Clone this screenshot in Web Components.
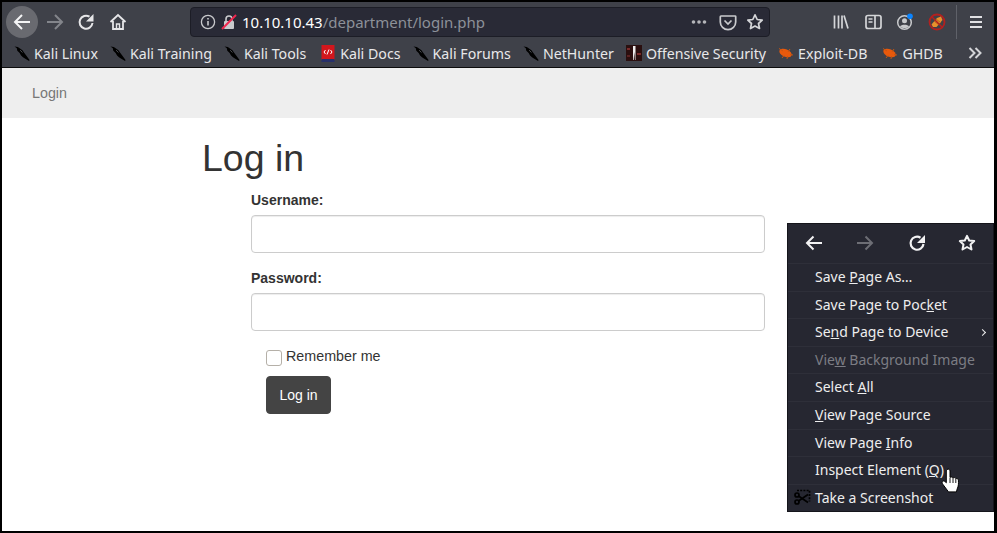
<!DOCTYPE html>
<html>
<head>
<meta charset="utf-8">
<title>Login</title>
<style>
  html, body { margin: 0; padding: 0; background: #fff; }
  body { width: 997px; height: 533px; overflow: hidden; }
</style>
</head>
<body>
<browser-window>
  <browser-toolbar></browser-toolbar>
  <bookmark-bar></bookmark-bar>
  <site-nav>Login</site-nav>
  <login-form></login-form>
  <context-menu></context-menu>
</browser-window>

<script>
// shared inline icons
const kaliIcon = `<svg width="17" height="17" viewBox="0 0 17 17"><path d="M0.500 1 L4 1.500 L6 3 L9 5 L11 8 L13 10.500 L16.500 15.500 L16 16.500 L12 14 L9.500 12.500 L7.500 10.500 L6 8 L3.500 5.500 L3 3 Z" fill="#000"/><path d="M6.500 5 9 7.500" stroke="#55565c" stroke-width="1"/></svg>`;
const bugIcon = `<svg width="16" height="16" viewBox="0 0 16 16"><ellipse cx="7.500" cy="8" rx="6.500" ry="3.800" transform="rotate(22 7.500 8)" fill="#e8590c"/><path d="M1 3.500 5 6M4 13 6 10.500M9 14 9.500 11M12 4 10 7M15 10l-3-.5" stroke="#c9560f" stroke-width="1"/></svg>`;

class BrowserWindow extends HTMLElement {
  constructor() {
    super();
    this.attachShadow({ mode: 'open' });
    this.shadowRoot.innerHTML = `
      <style>
        :host {
          display: block;
          position: relative;
          box-sizing: border-box;
          width: 997px;
          height: 533px;
          border: 2px solid #000;
          border-right-width: 3px;
          overflow: hidden;
          background: #fff;
        }
      </style>
      <slot></slot>`;
  }
}

class BrowserToolbar extends HTMLElement {
  constructor() {
    super();
    this.attachShadow({ mode: 'open' });
    this.shadowRoot.innerHTML = `
      <style>
        :host {
          display: flex;
          align-items: center;
          height: 40px;
          background: #3f4149;
          box-sizing: border-box;
          padding-left: 4px;
          font-family: "Noto Sans", sans-serif;
        }
        .btn { width: 32px; height: 32px; display: flex; align-items: center; justify-content: center; flex: none; }
        .back { background: #696a70; border-radius: 50%; }
        svg { display: block; }
        .url {
          flex: none;
          box-sizing: border-box;
          width: 580px;
          height: 30px;
          margin-left: 56px;
          margin-right: 55px;
          background: #292a36;
          border: 1px solid #1c1d26;
          border-radius: 4px;
          display: flex;
          align-items: center;
          padding-left: 9px;
          font-size: 15px;
          color: #8d9199;
        }
        .url b { font-weight: 400; color: #fff; }
        .addr { margin-left: 5px; flex: 1; white-space: nowrap; }
        .lock { margin-left: 5px; }
        .pageacts { display: flex; align-items: center; gap: 9px; padding-right: 5px; }
        .dots { margin-right: 3px; }
        .sep { width: 1px; height: 34px; background: #5f6169; margin: 0 9px 0 3px; flex: none; }
      </style>
      <div class="btn back"><svg width="20" height="20" viewBox="0 0 20 20" fill="none" stroke="#f4f4f5" stroke-width="2"><path d="M18 10H3M10 3l-7 7 7 7"/></svg></div>
      <div class="btn"><svg width="20" height="20" viewBox="0 0 20 20" fill="none" stroke="#83858b" stroke-width="2"><path d="M3 10h15M11 3l7 7-7 7"/></svg></div>
      <div class="btn"><svg width="18" height="18" viewBox="0 0 18 18" fill="none" stroke="#e6e6e8" stroke-width="2"><path d="M15.500 10A6.500 6.500 0 1 1 12.500 3.700"/><path d="M16.500 1v7.500H9Z" fill="#e6e6e8" stroke="none"/></svg></div>
      <div class="btn"><svg width="18" height="18" viewBox="0 0 18 18" fill="none" stroke="#e6e6e8" stroke-width="1.800"><path d="M1.500 9 9 2l7.500 7M4 8v8h10V8"/><path d="M7.500 16v-5h3v5" stroke-width="1.400"/></svg></div>
      <div class="url">
        <svg width="16" height="16" viewBox="0 0 16 16" fill="none" stroke="#c9cacd" stroke-width="1.300"><circle cx="8" cy="8" r="6.600"/><path d="M8 7v4.500M8 4v1.600" stroke-width="1.600"/></svg>
        <svg class="lock" width="16" height="16" viewBox="0 0 16 16"><path d="M5 7V5a3 3 0 0 1 6 0v2" fill="none" stroke="#c9cacd" stroke-width="1.600"/><rect x="3" y="7" width="10" height="8" rx="1" fill="#c9cacd"/><path d="M1 15 15 1" stroke="#f0274f" stroke-width="2"/></svg>
        <span class="addr"><b>10.10.10.43</b>/department/login.php</span>
        <div class="pageacts">
          <svg class="dots" width="16" height="6" viewBox="0 0 16 6" fill="#b5b6ba"><circle cx="2.500" cy="3" r="1.800"/><circle cx="8" cy="3" r="1.800"/><circle cx="13.500" cy="3" r="1.800"/></svg>
          <svg width="18" height="18" viewBox="0 0 18 18" fill="none" stroke="#c9cacd" stroke-width="1.700"><path d="M2 3h14a.7.7 0 0 1 .7.7V9a7.700 7.700 0 0 1-15.400 0V3.700A.7.7 0 0 1 2 3Z"/><path d="M5.500 7.500 9 11l3.500-3.500"/></svg>
          <svg width="18" height="18" viewBox="0 0 18 18" fill="none" stroke="#d4d5d8" stroke-width="1.700" stroke-linejoin="round"><path d="M9 1.800 11.200 6.500l5 .6-3.700 3.400 1 5L9 13l-4.500 2.500 1-5L1.800 7.100l5-.6Z"/></svg>
        </div>
      </div>
      <div class="btn"><svg width="16" height="16" viewBox="0 0 16 16" fill="none" stroke="#d4d5d8" stroke-width="1.700"><path d="M1.500 1.500v13M5.500 1.500v13M9 1.500v13M11 1.500l4 13"/></svg></div>
      <div class="btn"><svg width="17" height="16" viewBox="0 0 17 16" fill="none" stroke="#d4d5d8" stroke-width="1.700"><rect x="1" y="1.500" width="15" height="13" rx="2"/><path d="M10 1.500v13M3.500 5h4M3.500 8h4"/></svg></div>
      <div class="btn"><svg width="18" height="18" viewBox="0 0 18 18"><circle cx="8.500" cy="9.500" r="6.800" fill="none" stroke="#c9cacd" stroke-width="1.500"/><circle cx="8.500" cy="7.800" r="2.500" fill="#c9cacd"/><path d="M4 13.500c1-2.500 8-2.500 9 0-2 2-7 2-9 0Z" fill="#c9cacd"/><circle cx="14" cy="3.200" r="2.800" fill="#0a84ff"/></svg></div>
      <div class="btn"><svg width="18" height="18" viewBox="0 0 18 18"><circle cx="9" cy="9" r="7.500" fill="#3f4149" stroke="#b3201f" stroke-width="1.800"/><path d="M3.500 11.500 9 5l4-1.500 1.500 3.500-6 7L5 14Z" fill="#e8912d"/><path d="M6 8l5 4M8 6l5 4" stroke="#b96a1a" stroke-width="1"/><path d="M4 4 14 14" stroke="#b3201f" stroke-width="1.500"/></svg></div>
      <div class="sep"></div>
      <div class="btn" style="width:20px"><svg width="14" height="14" viewBox="0 0 14 14" stroke="#e0e0e3" stroke-width="2"><path d="M1 2h12M1 7h12M1 12h12"/></svg></div>`;
  }
}

class BookmarkBar extends HTMLElement {
  constructor() {
    super();
    this.attachShadow({ mode: 'open' });
    const docs = `<svg width="15" height="17" viewBox="0 0 15 17"><rect x="1" y="0" width="13" height="15" fill="#d2161c"/><rect x="1" y="14" width="13" height="3" fill="#27306a"/><path d="M5 5 3.500 7 5 9M10 5l1.500 2L10 9M8.500 4.500 6.500 9.500" stroke="#fff" fill="none"/></svg>`;
    const offsec = `<svg width="16" height="16" viewBox="0 0 16 16"><rect width="16" height="16" fill="#2a0f0f"/><rect x="1" y="3" width="3" height="2" fill="#7a2a2a"/><rect x="11" y="8" width="4" height="2" fill="#7a2a2a"/><rect x="1" y="10" width="3" height="2" fill="#5a2020"/><path d="M7 1h2.500v14H9L8.300 7 7.700 15H7Z" fill="#eee"/></svg>`;
    const items = [
      [kaliIcon, 'Kali Linux'], [kaliIcon, 'Kali Training'], [kaliIcon, 'Kali Tools'],
      [docs, 'Kali Docs'], [kaliIcon, 'Kali Forums'], [kaliIcon, 'NetHunter'],
      [offsec, 'Offensive Security'], [bugIcon, 'Exploit-DB'], [bugIcon, 'GHDB']
    ];
    this.shadowRoot.innerHTML = `
      <style>
        :host {
          display: flex;
          align-items: center;
          height: 26px;
          box-sizing: border-box;
          padding: 0 0 3px 12px;
          gap: 12px;
          background: #3f4149;
          border-bottom: 1px solid #0c0c0d;
          font-family: "Noto Sans", sans-serif;
          font-size: 14.200px;
          color: #e8e8ea;
          white-space: nowrap;
        }
        .item { display: flex; align-items: center; gap: 4px; }
        .item svg { width: 16px; flex: none; display: block; }
        .item:nth-of-type(4) { margin-left: 2px; }
        .item:last-of-type { margin-left: 3px; }
        .more { margin-left: 13px; display: block; }
      </style>
      ${items.map(([icon, label]) => `<div class="item">${icon}<span>${label}</span></div>`).join('')}
      <svg class="more" width="14" height="12" viewBox="0 0 14 12" fill="none" stroke="#d4d5d8" stroke-width="2"><path d="M1.500 1l5 5-5 5M7.500 1l5 5-5 5"/></svg>`;
  }
}

class SiteNav extends HTMLElement {
  constructor() {
    super();
    this.attachShadow({ mode: 'open' });
    this.shadowRoot.innerHTML = `
      <style>
        :host {
          display: flex;
          align-items: center;
          height: 50px;
          padding-left: 30px;
          background: #eee;
          color: #777;
          font-family: "Liberation Sans", sans-serif;
          font-size: 14.300px;
        }
      </style>
      <slot></slot>`;
  }
}

class LoginForm extends HTMLElement {
  constructor() {
    super();
    this.attachShadow({ mode: 'open' });
    this.shadowRoot.innerHTML = `
      <style>
        :host {
          display: block;
          padding-left: 200px;
          font-family: "Liberation Sans", sans-serif;
          font-size: 14px;
          color: #333;
        }
        * { box-sizing: border-box; }
        h1 { margin: 0; padding-top: 20px; font-size: 37.500px; font-weight: 400; line-height: 41px; color: #333; }
        form { width: 514px; margin-left: 49px; padding-top: 11px; }
        label.field { display: block; font-weight: 700; line-height: 20px; margin-bottom: 5px; }
        input.text {
          display: block;
          width: 100%;
          height: 38px;
          margin-bottom: 15px;
          border: 1px solid #ccc;
          border-radius: 4px;
          background: #fff;
          box-shadow: inset 0 1px 1px rgba(0,0,0,.075);
        }
        .remember { display: flex; align-items: flex-start; gap: 4px; margin: 15px 0 0 15px; line-height: 20px; font-size: 14.300px; }
        .box { width: 16px; height: 16px; margin-top: 4px; border: 1px solid #b5b0a8; border-radius: 3px; background: #fff; flex: none; }
        button {
          display: block;
          margin: 10px 0 0 15px;
          height: 38px;
          width: 65px;
          padding: 0;
          border: 1px solid #444;
          border-radius: 4px;
          background: #444;
          color: #fff;
          font: inherit;
        }
      </style>
      <h1>Log in</h1>
      <form>
        <label class="field">Username:</label>
        <input class="text" type="text">
        <label class="field">Password:</label>
        <input class="text" type="password" style="margin-bottom:0">
        <div class="remember"><span class="box"></span><span>Remember me</span></div>
        <button type="button">Log in</button>
      </form>`;
  }
}

class ContextMenu extends HTMLElement {
  constructor() {
    super();
    this.attachShadow({ mode: 'open' });
    const rows = [
      ['Save <u>P</u>age As…'],
      ['Save Page to Poc<u>k</u>et'],
      ['Se<u>n</u>d Page to Device', 'sub'],
      ['Vie<u>w</u> Background Image', 'off'],
      ['Select <u>A</u>ll'],
      ['<u>V</u>iew Page Source'],
      ['View Page <u>I</u>nfo'],
      ['Inspect Element (<u>Q</u>)'],
      ['Take a Screenshot', 'shot']
    ];
    this.shadowRoot.innerHTML = `
      <style>
        :host {
          display: block;
          position: absolute;
          left: 785px;
          top: 221px;
          width: 207px;
          box-sizing: border-box;
          background: #262731;
          border: 1px solid #15151b;
          font-family: "Noto Sans", sans-serif;
          font-size: 14px;
          color: #eee;
          white-space: nowrap;
        }
        .nav { display: flex; align-items: center; height: 39px; padding: 0 0 1px 17px; box-sizing: border-box; }
        .nav svg { display: block; flex: none; }
        .row { position: relative; height: 27.600px; line-height: 26.600px; padding-left: 27px; border-top: 1px solid #2e2f39; box-sizing: border-box; }
        .off { color: #7c7d84; }
        .sub::after { content: ""; position: absolute; right: 8px; top: 11px; width: 4px; height: 4px; border: solid #eee; border-width: 1.500px 1.500px 0 0; transform: rotate(45deg); }
        .scissors { position: absolute; left: 6px; top: 4px; display: block; }
        .hand { position: absolute; left: 153px; top: 244px; display: block; }
      </style>
      <div class="nav">
        <svg width="18" height="16" viewBox="0 0 18 16" fill="none" stroke="#f2f2f3" stroke-width="2"><path d="M17 8H2M8.500 1.500 2 8l6.500 6.500"/></svg>
        <svg style="margin-left:33px" width="18" height="16" viewBox="0 0 18 16" fill="none" stroke="#6d6e75" stroke-width="2"><path d="M1 8h15M9.500 1.500 16 8l-6.500 6.500"/></svg>
        <svg style="margin-left:34px" width="18" height="18" viewBox="0 0 18 18" fill="none" stroke="#f2f2f3" stroke-width="2.200"><path d="M15.500 10A6.500 6.500 0 1 1 12.500 3.700"/><path d="M17 1v8H9Z" fill="#f2f2f3" stroke="none"/></svg>
        <svg style="margin-left:32px" width="18" height="18" viewBox="0 0 18 18" fill="none" stroke="#f2f2f3" stroke-width="2" stroke-linejoin="round"><path d="M9 1.800 11.200 6.500l5 .6-3.700 3.400 1 5L9 13l-4.500 2.500 1-5L1.800 7.100l5-.6Z"/></svg>
      </div>
      ${rows.map(([label, kind]) => `<div class="row ${kind || ''}">${kind === 'shot' ? `<svg class="scissors" width="17" height="16" viewBox="0 0 17 16" fill="none" stroke="#000" stroke-width="1.700"><path d="M3 1.500h12.500v11" stroke-dasharray="2 1.200"/><circle cx="3" cy="6" r="2"/><circle cx="3" cy="13" r="2"/><path d="M4.500 7 14 13.500M4.500 12 14 5.500"/></svg>` : ''}${label}</div>`).join('')}
      <svg class="hand" width="20" height="25" viewBox="0 0 20 25"><path d="M6 1.500c1.400-1 3-.2 3 1.400V9.500c1-.8 2.400-.6 3 .4 1-.7 2.400-.3 2.800.7 1.100-.4 2.500.2 2.600 1.500.2 3.300.1 6.300-1.200 8.800l-.8 3H7.500L2 16.500c-1-1.400-1.200-2.500-.4-3.200 1-.7 2.300-.1 3.700 1.500V3c0-.6.300-1.100.7-1.500Z" fill="#fff" stroke="#000" stroke-width="1"/><path d="M9 10v5M12 10v5M14.800 11v4" stroke="#000" stroke-width=".9" fill="none"/></svg>`;
  }
}

customElements.define('browser-window', BrowserWindow);
customElements.define('browser-toolbar', BrowserToolbar);
customElements.define('bookmark-bar', BookmarkBar);
customElements.define('site-nav', SiteNav);
customElements.define('login-form', LoginForm);
customElements.define('context-menu', ContextMenu);
</script>
</body>
</html>
